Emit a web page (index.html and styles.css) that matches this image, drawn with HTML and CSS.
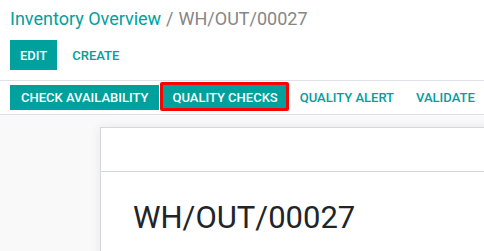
FILE: index.html
```html
<!DOCTYPE html>
<html>
<head>
<meta charset="utf-8">
<link rel="stylesheet" href="styles.css">
</head>
<body>
<div class="control-panel">
  <div class="breadcrumb">
    <a class="crumb-link">Inventory Overview</a>
    <span class="crumb-sep">/</span>
    <span class="crumb-active">WH/OUT/00027</span>
  </div>
  <div class="cp-buttons">
    <button class="btn btn-primary">EDIT</button>
    <button class="btn btn-link">CREATE</button>
  </div>
</div>
<div class="statusbar">
  <button class="btn btn-primary btn-sm btn-wide">CHECK AVAILABILITY</button>
  <button class="btn btn-primary btn-sm highlight">QUALITY CHECKS</button>
  <button class="btn btn-link btn-sm">QUALITY ALERT</button>
  <button class="btn btn-link btn-sm">VALIDATE</button>
</div>
<div class="sheet-bg">
  <div class="sheet">
    <div class="sheet-top"></div>
    <div class="sheet-body">
      <h1 class="record-name">WH/OUT/00027</h1>
    </div>
  </div>
</div>
</body>
</html>
```

FILE: styles.css
```css
* { box-sizing: border-box; }
html, body {
  margin: 0;
  padding: 0;
  width: 484px;
  height: 251px;
  overflow: hidden;
  background: #fff;
  font-family: Roboto, "Noto Sans", sans-serif;
}
.control-panel {
  height: 81px;
  padding: 7px 10px 0 10px;
  border-bottom: 1px solid #dee2e6;
}
.breadcrumb {
  font-size: 18px;
  line-height: 24px;
  white-space: nowrap;
  display: flex;
  gap: 5px;
}
.crumb-link { color: #00a09d; }
.crumb-sep, .crumb-active { color: #868686; }
.cp-buttons {
  display: flex;
  margin-top: 9px;
  gap: 5px;
}
.btn {
  font-family: Roboto, "Noto Sans", sans-serif;
  font-size: 13px;
  font-weight: 500;
  border: none;
  padding: 0 10px;
  height: 30px;
  white-space: nowrap;
  cursor: pointer;
  letter-spacing: 0;
}
.btn-primary {
  background: #00a09d;
  color: #fff;
}
.btn-link {
  background: transparent;
  color: #00a09d;
}
.statusbar {
  height: 34px;
  padding: 4px 10px;
  border-bottom: 1px solid #dee2e6;
  display: flex;
  gap: 2px;
}
.btn-sm {
  height: 25px;
  padding: 0 10px;
}
.btn-wide {
  padding: 0 11px;
}
.highlight {
  position: relative;
  margin-left: 1px;
}
.highlight::after {
  content: "";
  position: absolute;
  left: -2px;
  right: -1px;
  top: -3px;
  bottom: -1px;
  border: 3px solid #ff0000;
  border-radius: 2px;
  pointer-events: none;
}
.sheet-bg {
  background: #f9f9f9;
  height: 200px;
  padding: 12px 0 0 100px;
}
.sheet {
  width: 460px;
  height: 300px;
  background: #fff;
  border: 1px solid #d4d7dc;
  box-shadow: 0 0 10px rgba(0, 0, 0, 0.08);
}
.sheet-top {
  height: 44px;
  border-bottom: 1px solid #d4d7dc;
}
.sheet-body {
  padding: 28px 0 0 32px;
}
.record-name {
  margin: 0;
  font-size: 31px;
  font-weight: 400;
  line-height: 36px;
  color: #212529;
}
```
